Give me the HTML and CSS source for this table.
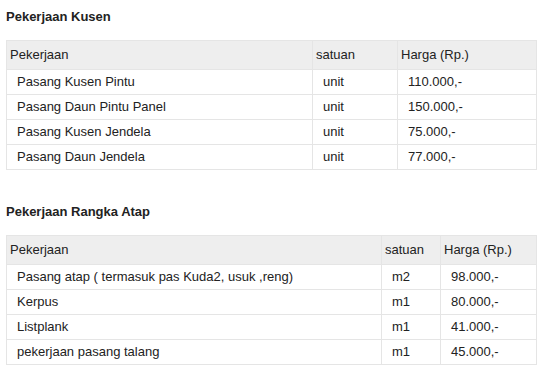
FILE: index.html
```html
<!DOCTYPE html>
<html>
<head>
<meta charset="utf-8">
<link rel="stylesheet" href="styles.css">
</head>
<body>
<h3 class="title">Pekerjaan Kusen</h3>
<table class="price kusen">
<colgroup><col class="c1"><col class="c2"><col class="c3"></colgroup>
<thead><tr><th>Pekerjaan</th><th>satuan</th><th>Harga (Rp.)</th></tr></thead>
<tbody>
<tr><td>Pasang Kusen Pintu</td><td>unit</td><td>110.000,-</td></tr>
<tr><td>Pasang Daun Pintu Panel</td><td>unit</td><td>150.000,-</td></tr>
<tr><td>Pasang Kusen Jendela</td><td>unit</td><td>75.000,-</td></tr>
<tr><td>Pasang Daun Jendela</td><td>unit</td><td>77.000,-</td></tr>
</tbody>
</table>
<h3 class="title second">Pekerjaan Rangka Atap</h3>
<table class="price atap">
<colgroup><col class="c1"><col class="c2"><col class="c3"></colgroup>
<thead><tr><th>Pekerjaan</th><th>satuan</th><th>Harga (Rp.)</th></tr></thead>
<tbody>
<tr><td>Pasang atap ( termasuk pas Kuda2, usuk ,reng)</td><td>m2</td><td>98.000,-</td></tr>
<tr><td>Kerpus</td><td>m1</td><td>80.000,-</td></tr>
<tr><td>Listplank</td><td>m1</td><td>41.000,-</td></tr>
<tr><td>pekerjaan pasang talang</td><td>m1</td><td>45.000,-</td></tr>
</tbody>
</table>
</body>
</html>
```
FILE: styles.css
```css
html, body {
  margin: 0;
  padding: 0;
  background: #fff;
}
body {
  padding: 9px 6px 0 6px;
  font-family: "Liberation Sans", Arial, sans-serif;
  font-size: 13px;
  line-height: 16px;
  color: #222;
}
.title {
  margin: 0 0 15px 0;
  font-size: 13px;
  line-height: 16px;
  font-weight: bold;
  color: #222;
}
.title.second {
  margin-top: 34px;
}
.price {
  border-collapse: collapse;
  table-layout: fixed;
  width: 530px;
}
.price th, .price td {
  border: 1px solid #e5e5e5;
  text-align: left;
  white-space: nowrap;
}
.price th {
  background: #eeeeee;
  font-weight: normal;
  padding: 6px 3px;
}
.price td {
  padding: 4px 10px;
}
.kusen .c1 { width: 306px; }
.kusen .c2 { width: 85px; }
.kusen .c3 { width: 139px; }
.atap .c1 { width: 375px; }
.atap .c2 { width: 59px; }
.atap .c3 { width: 96px; }
```
